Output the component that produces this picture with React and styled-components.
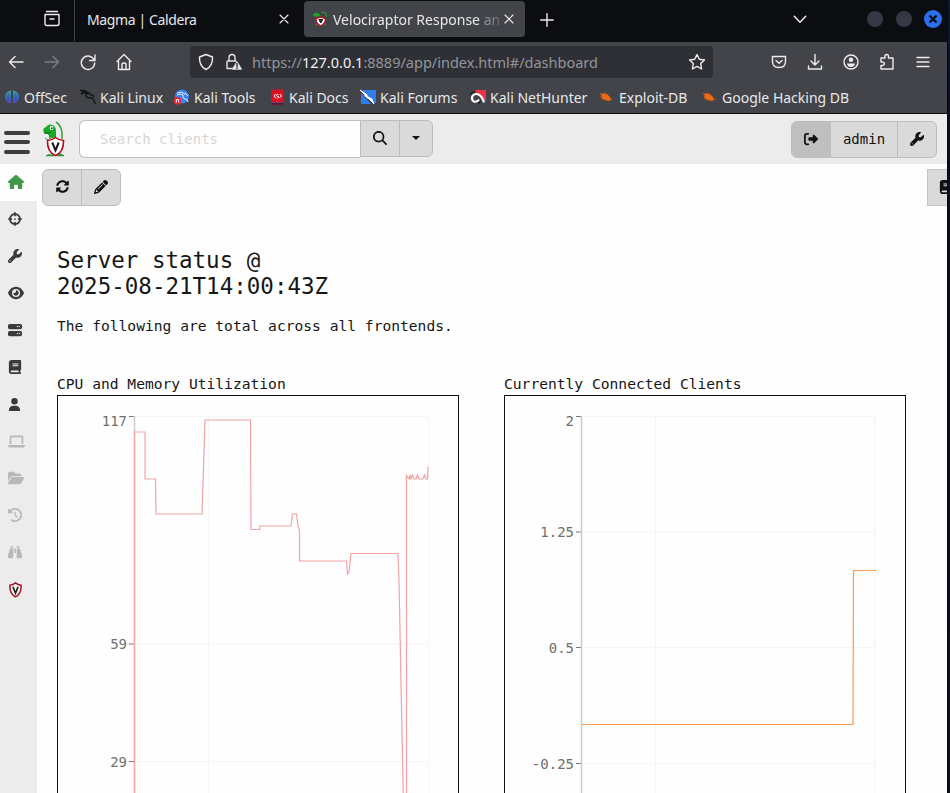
import React from "react";
import styled, { createGlobalStyle } from "styled-components";
import {
  FaHouse, FaCrosshairs, FaWrench, FaEye, FaServer, FaBook, FaUser, FaLaptop,
  FaFolderOpen, FaClockRotateLeft, FaBinoculars, FaPencil, FaMagnifyingGlass,
  FaRightFromBracket,
} from "react-icons/fa6";
import { FaSyncAlt } from "react-icons/fa";

const MONO = '"DejaVu Sans Mono", "Liberation Mono", monospace';

const Global = createGlobalStyle`
  * { box-sizing: border-box; }
  body { margin: 0; background: #fefefe; overflow: hidden; }
`;

const Screen = styled.div`
  display: grid;
  grid-template-columns: 947px 3px;
  width: 950px;
  height: 793px;
  overflow: hidden;
`;
const DesktopEdge = styled.div`
  background: linear-gradient(#0b1c38, #071022 12%, #0a0f1c 50%, #0a1226);
  border-left: 1px solid #05070d;
`;
const Window = styled.div`
  display: flex;
  flex-direction: column;
  height: 793px;
  overflow: hidden;
  font-family: "Noto Sans", sans-serif;
`;

/* browser chrome */
const TabBar = styled.div`
  display: flex;
  height: 42px;
  flex: none;
  background: #0c0d10;
  color: #e6e7ea;
  font-size: 14px;
  > * { flex: none; }
`;
const RecentTabs = styled.div`
  width: 75px;
  height: 41px;
  padding: 10px 0 0 43px;
  border-right: 1px solid #45464c;
`;
const Tab = styled.div`
  display: flex;
  align-items: center;
  width: ${(p) => p.$width}px;
  height: ${(p) => (p.$active ? 36 : 38)}px;
  margin-top: ${(p) => (p.$active ? 1 : 0)}px;
  margin-left: ${(p) => (p.$active ? 4 : 0)}px;
  padding-left: ${(p) => (p.$active ? 8 : 12)}px;
  padding-right: 10px;
  border-radius: 4px;
  background: ${(p) => (p.$active ? "#42444a" : "transparent")};
`;
const TabTitle = styled.span`
  flex: 1;
  white-space: nowrap;
  margin-top: 1px;
  margin-left: ${(p) => (p.$fade ? 5 : 0)}px;
  letter-spacing: -0.38px;
  ${(p) => p.$fade && "letter-spacing: 0; mask-image: linear-gradient(90deg, #000 86%, rgba(0,0,0,.5) 88%, rgba(0,0,0,.35) 96%, transparent);"}
`;
const NewTab = styled.div`
  padding: 12px 0 0 15px;
  width: 256px;
`;
const WindowControls = styled.div`
  display: flex;
  align-items: center;
  height: 38px;
  gap: 13px;
  margin-left: 48px;
  svg { margin-left: -1px; }
`;
const WinDot = styled.span`
  width: 16px;
  height: 16px;
  border-radius: 50%;
  background: #353845;
`;
const NavBar = styled.div`
  display: flex;
  align-items: center;
  height: 41px;
  flex: none;
  background: #42444a;
  padding: 0 0 1px 7px;
`;
const NavButtons = styled.div`
  display: flex;
  gap: 18px;
  width: 183px;
`;
const AddressBar = styled.div`
  display: flex;
  align-items: center;
  width: 523px;
  height: 32px;
  padding: 0 7px 0 7px;
  border-radius: 4px;
  background: #2e3036;
  font-size: 14.5px;
  color: #94959a;
`;
const AddressIcons = styled.div`
  display: flex;
  gap: 10px;
`;
const Url = styled.span`
  flex: 1;
  margin-left: 9px;
  white-space: nowrap;
  b { color: #f3f3f5; font-weight: 400; }
`;
const NavTools = styled.div`
  display: flex;
  gap: 18px;
  margin-left: 57px;
`;
const Bookmarks = styled.div`
  display: flex;
  height: 31px;
  flex: none;
  background: #42444a;
  border-bottom: 1px solid #0a0a0c;
  padding: 0 0 2px 4px;
  color: #e8e8ea;
  font-size: 14px;
`;
const Bookmark = styled.div`
  display: flex;
  align-items: center;
  gap: 4px;
  flex: none;
  width: ${(p) => p.$width}px;
  white-space: nowrap;
`;

/* application */
const Header = styled.header`
  display: flex;
  align-items: flex-start;
  flex: none;
  height: 50px;
  padding: 7px 10px 0 4px;
  background: #ececec;
  font: 14px ${MONO};
`;
const Burger = styled.div`
  display: flex;
  flex-direction: column;
  gap: 5.5px;
  width: 26px;
  padding-top: 9.5px;
  i { height: 4px; border-radius: 2px; background: #3e3e3e; }
`;
const Logo = styled.div`
  width: 49px;
  padding-left: 13px;
`;
const SearchInput = styled.div`
  width: 281px;
  height: 38px;
  margin-top: -1px;
  padding-left: 20px;
  line-height: 37px;
  border: 1px solid #bfbfbf;
  border-right: 0;
  border-radius: 6px 0 0 6px;
  background: #fefefe;
  color: #d6d6d6;
`;
const ButtonGroup = styled.div`
  display: flex;
  height: 37px;
  border: 1px solid #bdbdbd;
  border-radius: ${(p) => p.$radius || "6px"};
  background: #dadada;
  overflow: hidden;
  color: #111;
  margin-top: ${(p) => p.$lift || "0"};
  margin-left: ${(p) => p.$push || "0"};
`;
const GroupButton = styled.div`
  display: flex;
  align-items: center;
  justify-content: center;
  width: ${(p) => p.$width}px;
  background: ${(p) => (p.$dark ? "#bfbfbf" : "transparent")};
  padding-bottom: 2px;
  & + & { border-left: 1px solid #bdbdbd; }
`;
const Caret = styled.span`
  border: 4px solid transparent;
  border-top-color: #111;
  border-bottom: 0;
`;
const AppBody = styled.div`
  display: flex;
  flex: 1;
  min-height: 0;
`;
const Sidebar = styled.nav`
  width: 37px;
  flex: none;
  background: #ececec;
`;
const SideItem = styled.div`
  display: flex;
  align-items: center;
  height: 37px;
  padding: ${(p) => (p.$low ? "1px 0 0 8px" : "0 0 1px 8px")};
  color: ${(p) => (p.$active ? "#43984a" : p.$off ? "#b8b8b8" : "#3a3a3a")};
  background: ${(p) => (p.$active ? "#fefefe" : "transparent")};
`;
const Main = styled.main`
  flex: 1;
  min-width: 0;
  background: #fefefe;
  overflow: hidden;
  color: #161616;
  font: 14.62px ${MONO};
`;
const Toolbar = styled.div`
  display: flex;
  justify-content: space-between;
  padding: 5px 0 0 5px;
`;
const Cut = styled.div`
  display: flex;
  align-items: center;
  width: 20px;
  height: 37px;
  padding: 0 0 2px 11px;
  overflow: hidden;
  border: 1px solid #c4c4c4;
  border-right: 0;
  background: #dadada;
  color: #111;
  svg { flex: none; }
`;
const Report = styled.div`
  padding: 41px 20px 0;
`;
const Title = styled.h1`
  margin: 0;
  font-size: 22.52px;
  font-weight: 400;
  line-height: 26px;
`;
const Note = styled.p`
  margin: 17px 0 0;
  line-height: 20px;
`;
const Charts = styled.div`
  display: grid;
  grid-template-columns: 402px 402px;
  column-gap: 45px;
  margin-top: 38px;
`;
const ChartTitle = styled.div`
  height: 21px;
  line-height: 20px;
`;
const ChartBox = styled.div`
  height: 440px;
  border: 1px solid #111;
  svg { display: block; }
  text { font: 14px ${MONO}; fill: #6f6f6f; text-anchor: end; }
`;

const Line = ({ size = 18, w = 1.4, c = "#ececee", children }) => (
  <svg width={size} height={size} viewBox="0 0 18 18" fill="none" stroke={c} strokeWidth={w} strokeLinecap="round" strokeLinejoin="round">
    {children}
  </svg>
);
const Close = () => <Line size={12} w={1.7}><path d="M3 3l12 12M15 3L3 15" /></Line>;

const Raptor = () => (
  <svg width="22" height="36" viewBox="0 0 22 36" fill="none">
    <path d="M13 1q7 4 6 17" stroke="#36a637" strokeWidth="1.500" />
    <path d="M.5 10q-1-3 2.500-4 3-3.500 6-2 4 1 4 6v6l-7 2q1-4-2-5.500Q.5 13 .5 10z" fill="#14ac24" />
    <path d="M1 12q5 1 7-1" stroke="#075d0b" />
    <circle cx="8.500" cy="7" r="1.900" fill="#fff" /><circle cx="8.800" cy="7.200" r=".9" fill="#143014" />
    <path d="M2 17l3 2M3 34.800q3-2 5-.8l3 .8zM14 34.800q1-2.500 4-1.800l3 1.800z" stroke="#178d2b" fill="#24aa38" strokeWidth=".8" />
    <path d="M4.500 19.500q5-.5 8-3 3 2.500 8 3 .5 11.500-8 15-8.500-3.500-8-15z" fill="#fff" stroke="#b60b16" strokeWidth="1.600" />
    <path d="M9.300 21.500l3.200 7.800 3.200-7.800" stroke="#161616" strokeWidth="2" />
  </svg>
);
const TabRaptor = () => (
  <svg width="16" height="16" viewBox="0 0 16 16" fill="none">
    <path d="M9 1.500q6-1.500 5.500 4.500" stroke="#2b9b35" strokeWidth="1.200" />
    <path d="M1 3.500Q3 .5 7 2.500l2 3H4Q1 6 1 3.500z" fill="#14a824" />
    <path d="M3 13.500h11" stroke="#25843a" strokeWidth="1.500" />
    <path d="M4 7.500l4.500-1.500 5 1.500q0 5.500-4.800 7.300Q4 13 4 7.500z" fill="#fff" stroke="#ba1725" strokeWidth="1.400" />
    <path d="M6.800 8.500l2 3.500 2-3.500z" fill="#222" stroke="#222" />
  </svg>
);
const Shield = () => (
  <svg width="15" height="16" viewBox="0 0 18 20" fill="none">
    <path d="M2 4q4-.5 7-3q3 2.500 7 3q.5 11-7 14.500Q1.500 15 2 4z" fill="#f6f6f6" stroke="#a8142a" strokeWidth="1.900" />
    <path d="M5.800 6l3.200 8 3.200-8" stroke="#222" strokeWidth="2.100" />
  </svg>
);

const Fav = ({ kind }) => (
  <svg width="16" height="16" viewBox="0 0 16 16" fill="none">
    {kind === "offsec" && <>
      <defs><linearGradient id="os" x1="0" y1="0" x2="0" y2="1"><stop stopColor="#35a39b" /><stop offset=".55" stopColor="#3566c4" /><stop offset="1" stopColor="#5546b8" /></linearGradient></defs>
      <path d="M7 1.500v13Q1 13.500 1 8t6-6.500zM9 1.500q6 1 6 6.500t-6 6.500z" fill="url(#os)" />
      <path d="M4.300 4v8M11.800 4v8" stroke="#42444a" strokeWidth=".4" />
    </>}
    {kind === "linux" && <path d="M0 1.500q5-.5 8 2M1 5q4-2.500 8-1q1 1 2 2l2 .5 1 1.500M9 4Q5 4.500 6 7q1 2.500 5 2q3 0 4 6M2 3.300q3 0 5 .5" stroke="#111216" strokeWidth="1.500" />}
    {kind === "tools" && <>
      <circle cx="8" cy="7.500" r="7" fill="#3a83f0" />
      <path d="M3 4q5-2 8 1M3 6q4-2 6 0q-1 3 2 4q3 0 3 3M11 4l3 3" stroke="#e8f0ff" strokeWidth="1" />
      <rect x="0" y="8" width="7" height="7.500" rx="2.500" fill="#dc2b36" />
      <path d="M2.400 13.500v-3h2.300v3" stroke="#fff" strokeWidth=".9" />
    </>}
    {kind === "docs" && <>
      <path d="M2 2Q2 .5 4 .5h10.500v15H2z" fill="#d90f22" /><path d="M2 14h12.500v1.500H2z" fill="#4b1430" /><path d="M2 13.700h12.500" stroke="#3261ab" strokeWidth=".7" />
      <path d="M6.500 5L5 7l2 2.500M9.500 5.500q-2-.5-2 .8t1.800 1.300-.8 1.900M11 5l1.500 2-2 2" stroke="#fff" strokeWidth="1" />
    </>}
    {kind === "forums" && <>
      <path d="M3 1h13v13h-2L3 3zM1 4l10 11H1z" fill="#2f7eee" />
      <path d="M0 1l6 4 2 3 4 2 2 5-5-5-3-2-2-3z" fill="#fff" stroke="#fff" />
    </>}
    {kind === "hunter" && <>
      <path d="M5 1h11v11L5 4z" fill="#ef3048" />
      <path d="M14 13.500q-2-6.500-5.500-8Q4.500 4 2.500 7q-1.500 4 1.500 5.500 3 1 5-2" stroke="#fff" strokeWidth="2.200" />
      <path d="M0 5.500q2-3 6-3M8 14.500l3-2" stroke="#17181b" strokeWidth="1.200" />
    </>}
    {kind === "exploit" && <path d="M1 4l2 .8L5 4l3.500 1.500L11 8l.5 1.500 2 1-2 .5-1.500 1-3-.5-2-.9L2.500 10l.8-1L1.500 8l1.200-1z" fill="#ea6a17" stroke="#a9501f" strokeWidth=".5" />}
  </svg>
);

const BOOKMARKS = [
  ["offsec", "OffSec", 76], ["linux", "Kali Linux", 94], ["tools", "Kali Tools", 95],
  ["docs", "Kali Docs", 91], ["forums", "Kali Forums", 110], ["hunter", "Kali NetHunter", 129],
  ["exploit", "Exploit-DB", 103], ["exploit", "Google Hacking DB", 150],
];
const SIDE = [
  [FaHouse, 16, "active"], [FaCrosshairs, 14], [FaWrench, 14], [FaEye, 16], [FaServer, 14], [FaBook, 14],
  [FaUser, 13], [FaLaptop, 17, "off"], [FaFolderOpen, 16, "off"], [FaClockRotateLeft, 14, "off"], [FaBinoculars, 14, "off"], [Shield, 15, "low"],
];

const Chart = ({ ticks, line, color }) => (
  <ChartBox>
    <svg width="400" height="438">
      <path d="M77 20.500h294M150.500 20v418M370.500 20v418" stroke="#f4f4f4" />
      {ticks.map(([label, y]) => (
        <g key={label}>
          <path d={`M77 ${y}h294`} stroke="#f5f5f5" />
          <path d={`M71 ${y}h5`} stroke="#777" />
          <text x="69" y={y + (y < 30 ? 9.500 : 5)}>{label}</text>
        </g>
      ))}
      <path d="M76.500 20v418" stroke="#cfcbce" strokeWidth="1.500" />
      <path d={line} stroke={color} fill="none" strokeWidth="1.200" />
    </svg>
  </ChartBox>
);

export default function App() {
  return (
    <Screen>
      <Global />
      <Window>
        <TabBar>
          <RecentTabs><Line><path d="M3.500 1.500h11M2 4.500h14v9q0 2-2 2H4q-2 0-2-2zM7 9h4" /></Line></RecentTabs>
          <Tab $width={225}><TabTitle>Magma | Caldera</TabTitle><Close /></Tab>
          <Tab $active $width={221}>
            <TabRaptor />
            <TabTitle $fade>Velociraptor Response an</TabTitle><Close />
          </Tab>
          <NewTab><Line size={14} w={1.8}><path d="M9 1v16M1 9h16" /></Line></NewTab>
          <Line size={38}><path d="M6.300 7.700L9 10.500 11.700 7.700" strokeWidth=".7" /></Line>
          <WindowControls>
            <WinDot /><WinDot />
            <svg width="18" height="18" viewBox="0 0 18 18"><circle cx="9" cy="9" r="9" fill="#2a70ec" /><path d="M5.500 5.500l7 7M12.500 5.500l-7 7" stroke="#080c14" strokeWidth="2.200" /></svg>
          </WindowControls>
        </TabBar>
        <NavBar>
          <NavButtons>
            <Line><path d="M16 9H2.500M8 3.500L2.500 9 8 14.500" /></Line>
            <Line c="#7d7e83"><path d="M2 9h13.500M10 3.500L15.500 9 10 14.500" /></Line>
            <Line><path d="M15.300 7.500A6.700 6.700 0 1 0 15.700 10M16 2v5.500h-5.500" /></Line>
            <Line><path d="M2 8.500l7-7 7 7M3.500 8v8.500h11V8M7 16.500v-5q0-1.500 2-1.500t2 1.500v5" /></Line>
          </NavButtons>
          <AddressBar>
            <AddressIcons>
              <Line><path d="M9 1.500l6.500 2.500q.5 9-6.500 12.500Q2 13 2.500 4z" /></Line>
              <Line c="#e4e4e6">
                <path d="M4 8V5q0-3.500 3-3.500T10 5v3M7.500 15.500H2V9q0-1 1-1h8" />
                <path d="M12 9l4.200 7H7.800z" fill="#e4e4e6" />
                <path d="M12 10.500v3M12 15v.5" stroke="#2e3036" />
              </Line>
            </AddressIcons>
            <Url>https://<b>127.0.0.1</b>:8889/app/index.html#/dashboard</Url>
            <Line><path d="M9 1.500l2.300 4.800 5.200.7-3.800 3.600.9 5.400L9 13.400 4.400 16l.9-5.400L1.500 7l5.200-.7z" /></Line>
          </AddressBar>
          <NavTools>
            <Line><path d="M2.500 3.500h13v5q0 6-6.500 6t-6.500-6zM6 7.500l3 2.800 3-2.800" /></Line>
            <Line><path d="M9 1.500v10M5 8l4 4 4-4M2.500 13v3h13v-3" /></Line>
            <Line><circle cx="9" cy="9" r="7" /><circle cx="9" cy="6.800" r="2.200" fill="#ececee" stroke="none" /><path d="M5 10.500h8q-.5 3.500-4 3.500t-4-3.500z" fill="#ececee" stroke="none" /></Line>
            <Line><path d="M3 7V5h4V3q0-1.500 1.700-1.500T10.500 3v2H15v11H3v-3.500h1.500q2-.3 2-1.700T4.500 9H3z" /></Line>
            <Line><path d="M3 4.500h12M3 9h12M3 13.500h12" /></Line>
          </NavTools>
        </NavBar>
        <Bookmarks>
          {BOOKMARKS.map(([kind, label, width]) => (
            <Bookmark key={label} $width={width}><Fav kind={kind} />{label}</Bookmark>
          ))}
        </Bookmarks>
        <Header>
          <Burger><i /><i /><i /></Burger>
          <Logo><Raptor /></Logo>
          <SearchInput>Search clients</SearchInput>
          <ButtonGroup $radius="0 6px 6px 0" $lift="-1px">
            <GroupButton $width={38}><FaMagnifyingGlass size={14} /></GroupButton>
            <GroupButton $width={33}><Caret /></GroupButton>
          </ButtonGroup>
          <ButtonGroup $push="auto">
            <GroupButton $dark $width={38}><FaRightFromBracket size={14} /></GroupButton>
            <GroupButton $width={67}>admin</GroupButton>
            <GroupButton $width={39}><FaWrench size={14} /></GroupButton>
          </ButtonGroup>
        </Header>
        <AppBody>
          <Sidebar>
            {SIDE.map(([Icon, size, state], i) => (
              <SideItem key={i} $active={state === "active"} $off={state === "off"} $low={state === "low"}><Icon size={size} /></SideItem>
            ))}
          </Sidebar>
          <Main>
            <Toolbar>
              <ButtonGroup>
                <GroupButton $width={38}><FaSyncAlt size={13} /></GroupButton>
                <GroupButton $width={39}><FaPencil size={14} /></GroupButton>
              </ButtonGroup>
              <Cut><FaBook size={14} /></Cut>
            </Toolbar>
            <Report>
              <Title>Server status @<br />2025-08-21T14:00:43Z</Title>
              <Note>The following are total across all frontends.</Note>
              <Charts>
                <div>
                  <ChartTitle>CPU and Memory Utilization</ChartTitle>
                  <Chart
                    color="#f3a2a6"
                    ticks={[["117", 20.5], ["59", 248], ["29", 365.5]]}
                    line="M76.500 438V36H87V83H97.500L98 118H144L147 24H192.500L193 133.500H201.500L202 130H233L234.500 118H238.500L240 130L241.500 134V165H288.500L289.500 178L291 176L293 157.500H340L341 184L346 438M348.500 438V79.500L350 82L351 83L352 79L353 83L354.500 79L356 83H358L359.500 79L361 83H365L366.500 79L368 83H369.500L370 71"
                  />
                </div>
                <div>
                  <ChartTitle>Currently Connected Clients</ChartTitle>
                  <Chart
                    color="#ff9a4d"
                    ticks={[["2", 20.5], ["1.25", 136], ["0.5", 251.5], ["-0.25", 367.5]]}
                    line="M77 328.500H348L348.500 174.500H371"
                  />
                </div>
              </Charts>
            </Report>
          </Main>
        </AppBody>
      </Window>
      <DesktopEdge />
    </Screen>
  );
}
